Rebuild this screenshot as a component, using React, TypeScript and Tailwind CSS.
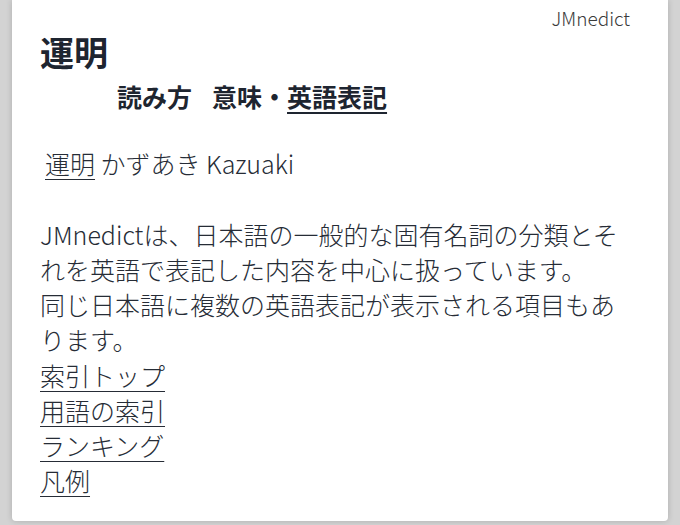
const links = ["索引トップ", "用語の索引", "ランキング", "凡例"];

export default function App() {
  return (
    <div
      className="h-[525px] w-[680px] overflow-hidden bg-[#d3d3d3] px-[12px] pb-[4px]"
      style={{ fontFamily: '"Noto Sans CJK JP", "Noto Sans", sans-serif' }}
    >
      <div className="h-[521px] rounded-b-[4px] bg-white shadow-[0_0_6px_rgba(0,0,0,0.18)]">
        {/* source label */}
        <div className="flex justify-end pr-[38px] pt-[7px] text-[19px] font-light leading-[22px] text-[#3a3a3a]">
          JMnedict
        </div>

        {/* entry heading */}
        <h1 className="mt-[3px] pl-[28px] text-[34px] font-bold leading-[40px] text-[#1e2530]">
          運明
        </h1>
        <div className="mt-[8px] flex pl-[105px] text-[25px] font-bold leading-[32px] text-[#1e2530]">
          <span>読み方</span>
          <span className="ml-[20px]">意味・</span>
          <span className="underline decoration-[2px] underline-offset-[5px]">英語表記</span>
        </div>

        {/* reading row */}
        <div className="mt-[34px] pl-[33px] text-[25px] font-light leading-[35px] text-[#262c36]">
          <span className="underline decoration-1 underline-offset-[5px]">運明</span>
          <span> かずあき Kazuaki</span>
        </div>

        {/* description */}
        <div className="mt-[36px] w-[620px] pl-[28px] text-[25px] font-light leading-[35px] text-[#262c36]">
          <p>JMnedictは、日本語の一般的な固有名詞の分類とそれを英語で表記した内容を中心に扱っています。</p>
          <p>同じ日本語に複数の英語表記が表示される項目もあります。</p>
          <ul className="mt-[1px]">
            {links.map((l) => (
              <li key={l}>
                <a href="#" className="underline decoration-1 underline-offset-[5px]">
                  {l}
                </a>
              </li>
            ))}
          </ul>
        </div>
      </div>
    </div>
  );
}
